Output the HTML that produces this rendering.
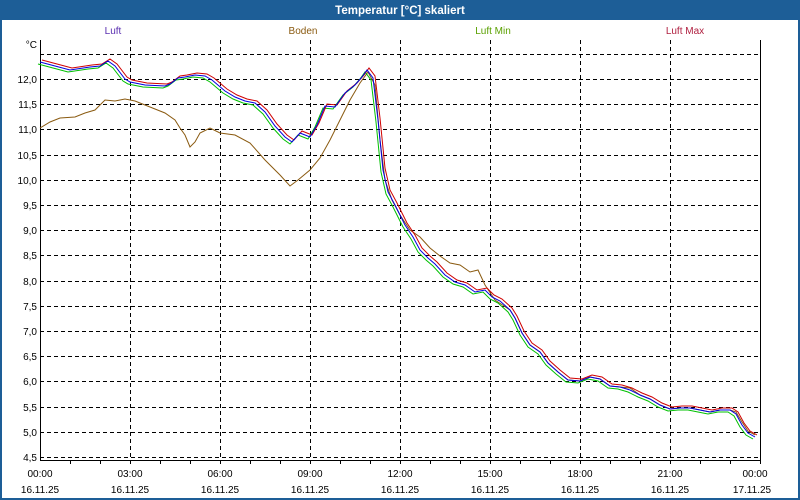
<!DOCTYPE html>
<html><head><meta charset="utf-8"><style>
html,body{margin:0;padding:0;width:800px;height:500px;overflow:hidden;background:#fff;font-family:"Liberation Sans",sans-serif}
</style></head><body>
<svg width="800" height="500" xmlns="http://www.w3.org/2000/svg" font-family="Liberation Sans, sans-serif" font-size="10.5">
<rect x="0" y="0" width="800" height="500" fill="#1d5e97"/>
<rect x="2" y="20" width="796" height="478" fill="#fff"/>
<text x="400" y="14" fill="#fff" font-weight="bold" font-size="11.5" text-anchor="middle">Temperatur [°C] skaliert</text>
<g font-size="10" text-anchor="middle">
<text x="113" y="34" fill="#5a2fb0">Luft</text>
<text x="303" y="34" fill="#8a5a10">Boden</text>
<text x="493" y="34" fill="#5aa000">Luft Min</text>
<text x="685" y="34" fill="#b02040">Luft Max</text>
</g>
<g stroke="#000" stroke-dasharray="4,3" stroke-width="1">
<line x1="40" x2="760" y1="54.5" y2="54.5"/><line x1="40" x2="760" y1="79.5" y2="79.5"/><line x1="40" x2="760" y1="104.5" y2="104.5"/><line x1="40" x2="760" y1="129.5" y2="129.5"/><line x1="40" x2="760" y1="155.5" y2="155.5"/><line x1="40" x2="760" y1="180.5" y2="180.5"/><line x1="40" x2="760" y1="205.5" y2="205.5"/><line x1="40" x2="760" y1="230.5" y2="230.5"/><line x1="40" x2="760" y1="255.5" y2="255.5"/><line x1="40" x2="760" y1="281.5" y2="281.5"/><line x1="40" x2="760" y1="306.5" y2="306.5"/><line x1="40" x2="760" y1="331.5" y2="331.5"/><line x1="40" x2="760" y1="356.5" y2="356.5"/><line x1="40" x2="760" y1="381.5" y2="381.5"/><line x1="40" x2="760" y1="407.5" y2="407.5"/><line x1="40" x2="760" y1="432.5" y2="432.5"/><line x1="40" x2="760" y1="457.5" y2="457.5"/>
<line y1="40" y2="460" x1="130.5" x2="130.5"/><line y1="40" y2="460" x1="220.5" x2="220.5"/><line y1="40" y2="460" x1="310.5" x2="310.5"/><line y1="40" y2="460" x1="400.5" x2="400.5"/><line y1="40" y2="460" x1="490.5" x2="490.5"/><line y1="40" y2="460" x1="580.5" x2="580.5"/><line y1="40" y2="460" x1="670.5" x2="670.5"/>
</g>
<g stroke="#000" stroke-width="1" fill="none">
<path d="M40.5 40V460.5H760.5V40"/>
<path d="M70.5 460v4M100.5 460v4M130.5 460v4M160.5 460v4M190.5 460v4M220.5 460v4M250.5 460v4M280.5 460v4M310.5 460v4M340.5 460v4M370.5 460v4M400.5 460v4M430.5 460v4M460.5 460v4M490.5 460v4M520.5 460v4M550.5 460v4M580.5 460v4M610.5 460v4M640.5 460v4M670.5 460v4M700.5 460v4M730.5 460v4M760.5 460v4"/>
</g>
<g font-size="10" text-anchor="end" fill="#000">
<text x="37" y="48">°C</text>
<text x="37" y="83">12,0</text><text x="37" y="108">11,5</text><text x="37" y="133">11,0</text><text x="37" y="159">10,5</text><text x="37" y="184">10,0</text><text x="37" y="209">9,5</text><text x="37" y="234">9,0</text><text x="37" y="259">8,5</text><text x="37" y="285">8,0</text><text x="37" y="310">7,5</text><text x="37" y="335">7,0</text><text x="37" y="360">6,5</text><text x="37" y="385">6,0</text><text x="37" y="411">5,5</text><text x="37" y="436">5,0</text><text x="37" y="461">4,5</text>
</g>
<g font-size="10" text-anchor="middle" fill="#000">
<text x="40" y="477">00:00</text><text x="130" y="477">03:00</text><text x="220" y="477">06:00</text><text x="310" y="477">09:00</text><text x="400" y="477">12:00</text><text x="490" y="477">15:00</text><text x="580" y="477">18:00</text><text x="670" y="477">21:00</text><text x="755" y="477">00:00</text>
<text x="40" y="493">16.11.25</text><text x="130" y="493">16.11.25</text><text x="220" y="493">16.11.25</text><text x="310" y="493">16.11.25</text><text x="400" y="493">16.11.25</text><text x="490" y="493">16.11.25</text><text x="580" y="493">16.11.25</text><text x="670" y="493">16.11.25</text><text x="752" y="493">17.11.25</text>
</g>
<defs>
<path id="m" fill="none" d="M40 62L55 66L70 70L90 67L100 66L108 61L115 66L125 79L130 82L145 85L165 86L170 84L178 78L185 77L195 75L205 76L212 80L225 91L235 97L245 101L255 103L265 112L275 126L285 137L292 142L300 133L310 137L317 125L325 106L335 107L345 93L355 85L362 77L367 70L373 78L378 120L383 170L388 192L395 205L405 225L413 237L420 250L428 258L435 264L445 275L455 282L465 285L475 292L485 290L492 297L500 301L510 310L515 318L522 333L530 345L540 352L548 363L558 372L568 380L580 381L590 377L600 379L610 386L620 387L630 390L640 395L650 399L660 405L670 409L680 408L690 408L700 410L710 412L720 410L730 410L736 414L742 425L748 433L755 437"/>
</defs>
<path fill="none" stroke="#8a5a10" d="M40 128L50 122L60 118L75 117L85 113L95 110L105 100L115 101L125 99L135 101L150 107L165 113L175 120L180 128L185 135L190 147L195 142L200 133L210 128L220 133L235 135L250 143L265 160L280 175L290 186L298 180L310 170L320 158L330 140L340 120L350 100L360 83L368 72L375 85L380 140L385 180L392 200L400 215L410 230L420 237L430 248L440 256L450 263L460 265L470 272L478 270L485 285L495 300L510 310L515 318L522 333L530 345L540 352L548 363L558 372L568 380L580 381L590 377L600 379L610 386L620 387L630 388L640 395L650 399L660 405L670 409L680 408L690 408L700 410L710 412L720 410L730 410L736 412L742 422L748 431L755 435"/>
<use href="#m" stroke="#00c000" transform="translate(-2,2)"/>
<use href="#m" stroke="#d00000" transform="translate(2,-2)"/>
<use href="#m" stroke="#0000e0"/>
</svg>
</body></html>
